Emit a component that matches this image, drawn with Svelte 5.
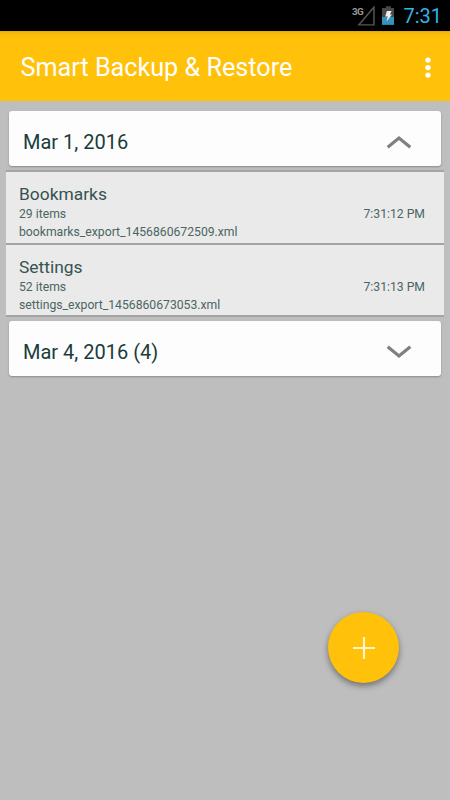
<script lang="ts">
	type Backup = { name: string; items: number; time: string; file: string };
	type Group = { date: string; open: boolean; backups: Backup[]; count?: number };

	let groups = $state<Group[]>([
		{
			date: 'Mar 1, 2016',
			open: true,
			backups: [
				{ name: 'Bookmarks', items: 29, time: '7:31:12 PM', file: 'bookmarks_export_1456860672509.xml' },
				{ name: 'Settings', items: 52, time: '7:31:13 PM', file: 'settings_export_1456860673053.xml' }
			]
		},
		{ date: 'Mar 4, 2016', open: false, backups: [], count: 4 }
	]);
</script>

<div class="screen">
	<div class="status">
		<svg class="signal" width="26" height="22" viewBox="0 0 26 22">
			<text x="0" y="8.5" textLength="12">3G</text>
			<path d="M7 19H22.3V1Z" fill="none" stroke="#555" stroke-width="1.5" />
		</svg>
		<svg class="battery" width="13" height="20" viewBox="0 0 13 20">
			<path d="M0 2H4V0H9V2H13V12H0Z" fill="#484848" />
			<path d="M0 11H13V19H0Z" fill="#3393bd" />
			<path d="M5 5H9.8L8 8.5H10.2L4.6 15.5L5.8 10.5H3.2Z" fill="#eee" />
		</svg>
		<span class="clock">7:31</span>
	</div>

	<header>
		<h1>Smart Backup &amp; Restore</h1>
		<button class="more" aria-label="More options">
			<svg width="6" height="22" viewBox="0 0 6 22" fill="#fff">
				<circle cx="3" cy="3.1" r="2.7" />
				<circle cx="3" cy="10.6" r="2.7" />
				<circle cx="3" cy="18.1" r="2.7" />
			</svg>
		</button>
	</header>

	<main>
		{#each groups as group (group.date)}
			<button class="card" onclick={() => (group.open = !group.open)}>
				<span class="date">{group.date}{group.count ? ` (${group.count})` : ''}</span>
				<svg class:open={group.open} width="26" height="14" viewBox="0 0 26 14">
					<path d="M1.7 1.7L13 11L24.3 1.7" fill="none" stroke="#808080" stroke-width="3.2" />
				</svg>
			</button>
			{#if group.open && group.backups.length}
				<ul>
					{#each group.backups as backup (backup.file)}
						<li>
							<div class="name">{backup.name}</div>
							<div class="info">
								<span>{backup.items} items</span>
								<span class="time">{backup.time}</span>
							</div>
							<div class="file">{backup.file}</div>
						</li>
					{/each}
				</ul>
			{/if}
		{/each}
	</main>

	<button class="fab" aria-label="New backup">
		<svg width="24" height="24" viewBox="0 0 24 24">
			<path d="M12 1V23M1 12H23" stroke="#fff3cc" stroke-width="2.2" />
		</svg>
	</button>
</div>

<style>
	:global(body) {
		margin: 0;
	}

	.screen {
		position: relative;
		width: 450px;
		height: 800px;
		display: flex;
		flex-direction: column;
		overflow: hidden;
		background: #bebebe;
		font-family: Roboto, sans-serif;
	}

	button {
		border: 0;
		padding: 0;
		font: inherit;
		cursor: pointer;
	}

	svg {
		display: block;
	}

	.status {
		box-sizing: border-box;
		height: 31px;
		display: flex;
		align-items: flex-start;
		padding: 6px 8px 0 352px;
		background: #000;
	}

	.signal text {
		font-size: 10px;
		font-weight: 700;
		fill: #999;
	}

	.battery {
		margin-left: 4px;
	}

	.clock {
		margin-left: 9px;
		margin-top: -2px;
		font-size: 20px;
		line-height: 24px;
		color: #33b5e5;
	}

	header {
		box-sizing: border-box;
		height: 70px;
		display: flex;
		align-items: center;
		justify-content: space-between;
		padding: 3px 19.5px 0 20.5px;
		background: linear-gradient(#e0a60d, #f7bb0b 2px, #ffc10a 8px);
	}

	h1 {
		margin: 0;
		font-size: 25.2px;
		font-weight: 400;
		line-height: 30px;
		color: #fff;
		white-space: nowrap;
	}

	.more {
		background: none;
	}

	main {
		display: flex;
		flex-direction: column;
		padding: 10px 6px 0;
	}

	.card {
		box-sizing: border-box;
		height: 55px;
		margin: 0 3px;
		padding: 7px 29px 0 14px;
		display: flex;
		align-items: center;
		justify-content: space-between;
		border-radius: 3px;
		background: #fdfdfd;
		box-shadow: 0 1px 2px rgba(0, 0, 0, 0.28);
		color: #193c3b;
	}

	.date {
		font-size: 20px;
		line-height: 24px;
		white-space: nowrap;
	}

	.card svg.open {
		transform: scaleY(-1);
	}

	ul {
		list-style: none;
		margin: 4px 0;
		padding: 0;
		border-top: 2px solid #a4a4a4;
	}

	li {
		box-sizing: border-box;
		height: 72.5px;
		padding: 11px 19px 0 13px;
		border-bottom: 2px solid #a4a4a4;
		background: #eaeaea;
		color: #4a6562;
	}

	.name {
		font-size: 17.4px;
		line-height: 22px;
		color: #36534f;
	}

	.info {
		display: flex;
		justify-content: space-between;
		line-height: 19px;
	}

	.info,
	.file {
		font-size: 12.2px;
	}

	.file {
		line-height: 16px;
	}

	.fab {
		position: absolute;
		left: 328px;
		top: 612px;
		width: 71px;
		height: 71px;
		display: flex;
		align-items: center;
		justify-content: center;
		border-radius: 50%;
		background: #ffc10a;
		box-shadow: 0 3px 6px rgba(0, 0, 0, 0.42);
	}
</style>
